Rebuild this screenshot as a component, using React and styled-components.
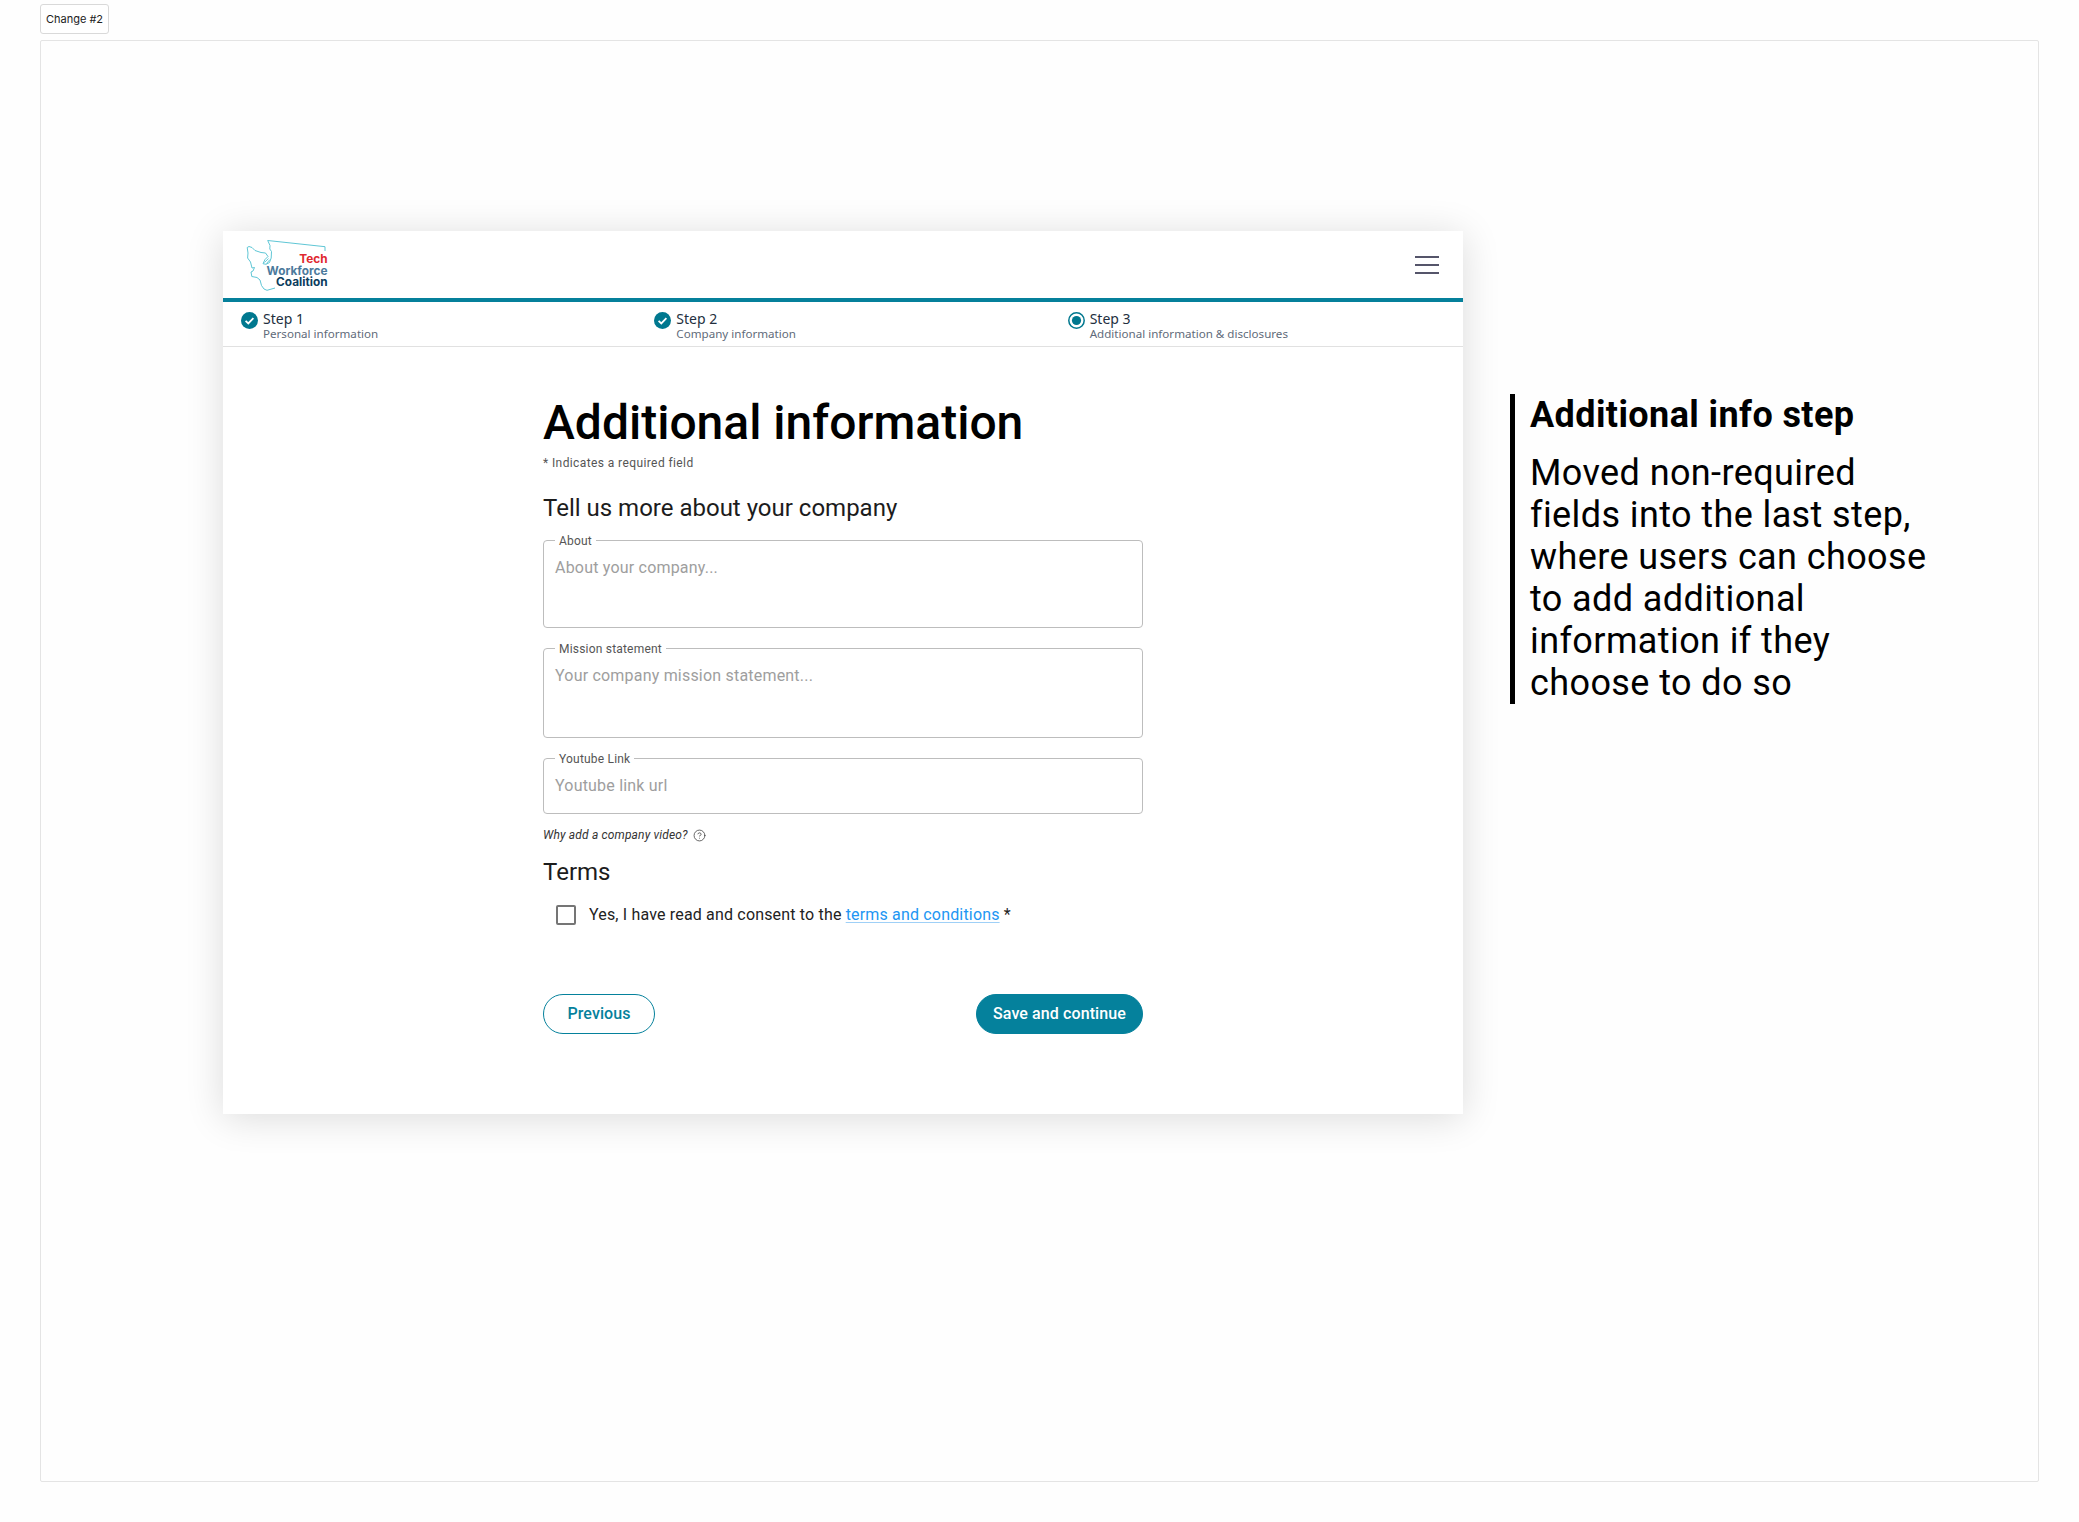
import React from "react";
import styled, { createGlobalStyle } from "styled-components";
import { CircleHelp } from "lucide-react";

const Global = createGlobalStyle`
  html, body { margin: 0; padding: 0; background: #fefefe; }
  body { font-family: Roboto, "Liberation Sans", sans-serif; color: #1c1c1c; }
  * { box-sizing: border-box; }
`;

const Page = styled.div`
  width: 2079px;
  height: 1522px;
  padding: 4px 0 0 40px;
  overflow: hidden;
`;

const Tag = styled.div`
  display: flex;
  align-items: center;
  justify-content: center;
  width: 69px;
  height: 30px;
  padding-bottom: 1px;
  border: 1px solid #d9d9d9;
  border-radius: 3px;
  background: #fff;
  font: 400 11px Inter, "Liberation Sans", sans-serif;
  color: #222;
`;

const Frame = styled.div`
  display: flex;
  align-items: flex-start;
  width: 1999px;
  height: 1442px;
  margin-top: 6px;
  padding: 190px 0 0 182px;
  border: 1px solid #e4e4e4;
  border-radius: 2px;
`;

const Card = styled.section`
  width: 1240px;
  height: 883px;
  flex: none;
  background: #fff;
  box-shadow: 0 4px 36px rgba(0, 0, 0, 0.14);
`;

const Header = styled.header`
  display: flex;
  align-items: center;
  justify-content: space-between;
  height: 71px;
  padding: 0 24px 0 21px;
  border-bottom: 4px solid #05809b;
`;

const LogoSvg = styled.svg`
  display: block;
  width: 88px;
  height: 58px;
  margin-top: 4px;
  text {
    font-family: Inter, "Noto Sans", sans-serif;
    font-weight: 700;
    font-size: 11.8px;
    text-anchor: end;
  }
`;

const Burger = styled.div`
  display: flex;
  flex-direction: column;
  gap: 6px;
  width: 24px;
  span {
    display: block;
    height: 2px;
    background: #55556a;
  }
`;

const Steps = styled.nav`
  display: grid;
  grid-template-columns: repeat(3, 1fr);
  height: 45px;
  border-bottom: 1px solid #e1e1e1;
`;

const Step = styled.div`
  display: flex;
  align-items: flex-start;
  gap: 5px;
  padding: 9px 0 0 18px;
`;

const StepIcon = styled.svg`
  flex: none;
  display: block;
  width: 17px;
  height: 17px;
  margin-top: 1px;
`;

const StepText = styled.div`
  display: flex;
  flex-direction: column;
  font-family: "Noto Sans", "Open Sans", sans-serif;
`;

const StepTitle = styled.span`
  font-size: 14px;
  line-height: 15px;
  color: #232f3e;
`;

const StepSub = styled.span`
  font-size: 11.6px;
  line-height: 16px;
  color: #5f6b7a;
`;

const Form = styled.div`
  width: 600px;
  margin: 0 auto;
  padding-top: 48px;
`;

const Title = styled.h1`
  margin: 0;
  font-size: 48px;
  line-height: 56px;
  font-weight: 500;
  color: #000;
`;

const Note = styled.p`
  margin: 4px 0 0;
  font-size: 12px;
  line-height: 16px;
  letter-spacing: 0.4px;
  color: #555;
`;

const Section = styled.h2`
  margin: ${(p) => p.$top}px 0 0;
  font-size: 24px;
  line-height: 32px;
  font-weight: 400;
  color: #1c1c1c;
`;

const Field = styled.div`
  position: relative;
  height: ${(p) => p.$height}px;
  margin-top: ${(p) => p.$top}px;
  padding: 17px 11px;
  border: 1px solid #bdbdbd;
  border-radius: 4px;
  font-size: 16px;
  line-height: 20px;
  letter-spacing: 0.2px;
  color: #9e9e9e;
`;

const FieldLabel = styled.label`
  position: absolute;
  top: -8px;
  left: 11px;
  padding: 0 4px;
  background: #fff;
  font-size: 12px;
  line-height: 16px;
  letter-spacing: 0.2px;
  color: #555;
`;

const Hint = styled.div`
  display: flex;
  align-items: center;
  gap: 5px;
  margin-top: 13px;
  font-size: 12px;
  line-height: 16px;
  font-style: italic;
  letter-spacing: 0.16px;
  color: #333;
`;

const Consent = styled.div`
  display: flex;
  align-items: center;
  gap: 13px;
  height: 20px;
  margin-top: 17px;
  padding-left: 13px;
  font-size: 16px;
  letter-spacing: 0.17px;
  color: #222;
`;

const ConsentText = styled.span`
  line-height: 19px;
  padding-bottom: 2px;
`;

const Box = styled.span`
  width: 20px;
  height: 20px;
  flex: none;
  border: 2.5px solid #757575;
  border-radius: 2px;
`;

const Link = styled.a`
  color: #2196f3;
  text-decoration: underline;
  text-decoration-color: #9fd0f7;
  text-underline-offset: 2px;
`;

const Actions = styled.div`
  display: flex;
  justify-content: space-between;
  margin-top: 69px;
`;

const Button = styled.button`
  height: 40px;
  width: ${(p) => p.$width}px;
  padding: 0 0 1px;
  border: 1px solid #05819c;
  border-radius: 20px;
  background: ${(p) => (p.$primary ? "#05819c" : "#fff")};
  color: ${(p) => (p.$primary ? "#fff" : "#05819c")};
  font: 500 16px Roboto, sans-serif;
  letter-spacing: 0.1px;
`;

const Aside = styled.aside`
  width: 420px;
  flex: none;
  margin: 163px 0 0 47px;
  padding: 0 0 0 15px;
  border-left: 5px solid #000;
  color: #000;
  letter-spacing: 0.4px;
`;

const AsideTitle = styled.h3`
  margin: 0;
  padding-bottom: 16px;
  font-size: 36px;
  line-height: 42px;
  font-weight: 700;
`;

const AsideBody = styled.p`
  margin: 0;
  font-size: 36px;
  line-height: 42px;
  font-weight: 400;
`;

const Logo = () => (
  <LogoSvg viewBox="0 0 88 58" role="img" aria-label="Tech Workforce Coalition">
    <path
      d="M23.7 2.5 L81 8.7 L81 13 M23.7 2.5 L26 7.5 L25.8 11 L27.5 13.5 L27.2 20 L25.5 24.5 L22 26.3 L19 25.7 L21 21.5 L24 18.5 L21.5 15 L17 14.5 L11 12.5 L8 9.5 L5 8.5 L3.2 9.5 L4 15 L3.6 20 L6.5 24 L8 30 L10.5 29.5 L9 33 L7 34 L7.8 38.5 L13 39.5 L16 42 L17.5 47.5 L20 51 L23 52.3 L31 50"
      fill="none"
      stroke="#4dbfd0"
      strokeWidth="0.9"
      strokeLinejoin="round"
    />
    <path d="M20.5 24.5 L24.5 20.5 M22.5 25.5 L26 21.5" stroke="#4dbfd0" strokeWidth="0.8" fill="none" />
    <text x="83.5" y="25" fill="#e0272f">Tech</text>
    <text x="83.5" y="36.6" fill="#4c7a9c">Workforce</text>
    <text x="83.5" y="48.2" fill="#0b3c5d">Coalition</text>
  </LogoSvg>
);

const Done = () => (
  <StepIcon viewBox="0 0 17 17">
    <circle cx="8.5" cy="8.5" r="8.5" fill="#00788f" />
    <path d="M4.6 8.8 L7.3 11.4 L12.4 6.2" fill="none" stroke="#fff" strokeWidth="1.8" />
  </StepIcon>
);

const Current = () => (
  <StepIcon viewBox="0 0 17 17">
    <circle cx="8.5" cy="8.5" r="7.7" fill="none" stroke="#00788f" strokeWidth="1.5" />
    <circle cx="8.5" cy="8.5" r="4.6" fill="#00788f" />
  </StepIcon>
);

const stepData = [
  { title: "Step 1", sub: "Personal information", Icon: Done },
  { title: "Step 2", sub: "Company information", Icon: Done },
  { title: "Step 3", sub: "Additional information & disclosures", Icon: Current },
];

export default function App() {
  return (
    <Page>
      <Global />
      <Tag>Change #2</Tag>
      <Frame>
        <Card>
          <Header>
            <Logo />
            <Burger>
              <span />
              <span />
              <span />
            </Burger>
          </Header>
          <Steps>
            {stepData.map(({ title, sub, Icon }) => (
              <Step key={title}>
                <Icon />
                <StepText>
                  <StepTitle>{title}</StepTitle>
                  <StepSub>{sub}</StepSub>
                </StepText>
              </Step>
            ))}
          </Steps>
          <Form>
            <Title>Additional information</Title>
            <Note>* Indicates a required field</Note>
            <Section $top={21}>Tell us more about your company</Section>
            <Field $height={88} $top={16}>
              <FieldLabel>About</FieldLabel>
              About your company...
            </Field>
            <Field $height={90} $top={20}>
              <FieldLabel>Mission statement</FieldLabel>
              Your company mission statement...
            </Field>
            <Field $height={56} $top={20}>
              <FieldLabel>Youtube Link</FieldLabel>
              Youtube link url
            </Field>
            <Hint>
              Why add a company video?
              <CircleHelp size={13} strokeWidth={1.5} color="#444" />
            </Hint>
            <Section $top={13}>Terms</Section>
            <Consent>
              <Box />
              <ConsentText>
                Yes, I have read and consent to the <Link href="#">terms and conditions</Link> *
              </ConsentText>
            </Consent>
            <Actions>
              <Button $width={112}>Previous</Button>
              <Button $width={167} $primary>Save and continue</Button>
            </Actions>
          </Form>
        </Card>
        <Aside>
          <AsideTitle>Additional info step</AsideTitle>
          <AsideBody>
            Moved non-required fields into the last step, where users can choose to add additional information if they choose to do so
          </AsideBody>
        </Aside>
      </Frame>
    </Page>
  );
}
